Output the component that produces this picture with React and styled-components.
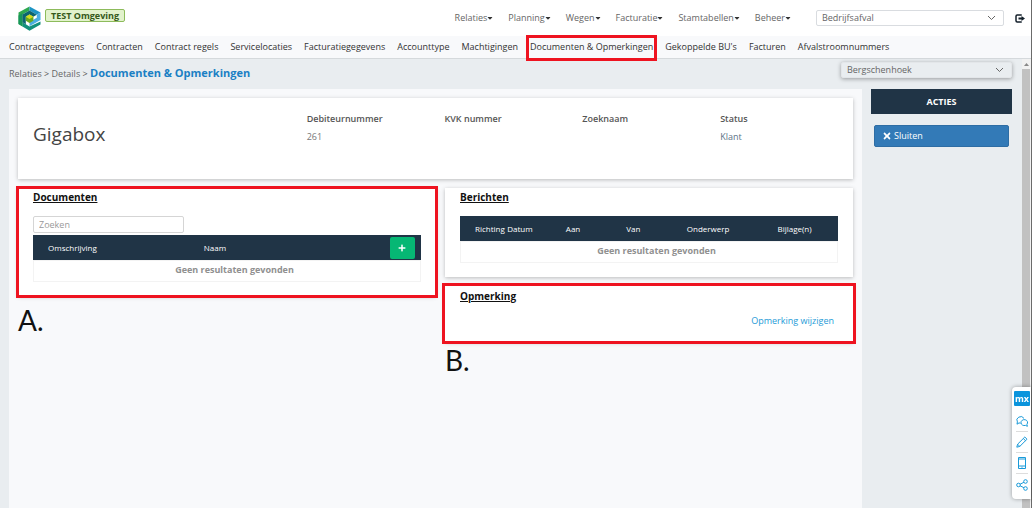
import React from "react";
import styled, { createGlobalStyle, css } from "styled-components";
import { FaCaretDown, FaPlus, FaTimes } from "react-icons/fa";

// -----------------------------------
// Styled Components
// -----------------------------------

const GlobalStyle = createGlobalStyle`
  * {
    box-sizing: border-box;
  }

  body {
    margin: 0;
    font-family: "Open Sans", sans-serif;
    font-size: 9px;
    line-height: 12px;
    color: #555555;
    background: #ffffff;
  }

  button, input, select {
    font: inherit;
  }

  a {
    text-decoration: none;
  }
`;

const Page = styled.div`
  display: flex;
  flex-direction: column;
  min-height: 100vh;
  border-right: 1px solid #6b6b6b;
`;

const TopBar = styled.header`
  display: flex;
  align-items: center;
  height: 36px;
  padding: 0 6px 0 18px;
`;

const EnvironmentTag = styled.span`
  align-self: flex-start;
  margin: 9px auto 0 4px;
  padding: 0 5px;
  border: 1px solid #8dbb5b;
  border-radius: 2px;
  background: #e2f2cc;
  color: #35591a;
  font-weight: 700;
  line-height: 11px;
`;

const MainMenu = styled.nav`
  display: flex;
  gap: 15px;
  margin-right: 25px;
`;

const MenuButton = styled.button`
  display: flex;
  align-items: center;
  padding: 0;
  border: 0;
  background: none;
  color: #666666;

  svg {
    width: 6px;
    height: 8px;
    color: #333333;
  }
`;

const SelectWrapper = styled.label`
  display: grid;
  align-items: center;
  width: ${(props) => props.$width};

  select,
  svg {
    grid-area: 1 / 1;
  }

  svg {
    justify-self: end;
    margin-right: 8px;
    pointer-events: none;
  }
`;

const Select = styled.select`
  appearance: none;
  width: 100%;
  height: 16px;
  padding: 0 5px;
  border: 1px solid #d9dce0;
  border-radius: 2px;
  background: #ffffff;
  color: #666666;

  ${(props) =>
    props.$raised &&
    css`
      border-color: #e3e6e9;
      background: #e9edf0;
      box-shadow: 0 1px 4px rgba(0, 0, 0, 0.35);
    `}
`;

const LogoutButton = styled.button`
  display: flex;
  margin-left: 11px;
  padding: 0;
  border: 0;
  background: none;
  color: #14202b;
`;

const SubNav = styled.nav`
  display: flex;
  align-items: center;
  gap: 12px;
  height: 23px;
  padding-left: 9px;
  border-bottom: 1px solid #d5d9dc;
  background: #f8f9fb;
`;

const SubNavLink = styled.a`
  position: relative;
  color: #333333;
  white-space: nowrap;
`;

const Highlight = styled.span`
  position: absolute;
  inset: ${(props) => props.$inset || "-2px"};
  border: 3px solid #ee1320;
  pointer-events: none;
`;

const Body = styled.div`
  display: flex;
  flex: 1;
  background: #e9edf0;
`;

const Content = styled.div`
  display: flex;
  flex: 1;
  flex-direction: column;
  padding: 0 10px 0 9px;
`;

const CrumbRow = styled.div`
  display: flex;
  align-items: flex-start;
  justify-content: space-between;
  height: 30px;
  padding-top: 3px;
`;

const Breadcrumb = styled.div`
  line-height: 22px;

  a {
    color: #666666;
  }

  strong {
    color: #1b80c4;
    font-size: 11px;
  }
`;

const Columns = styled.div`
  display: flex;
  flex: 1;
  gap: 9px;
`;

const Panel = styled.main`
  flex: 1;
  padding: 9px;
  background: #f8f9fb;
`;

const Card = styled.section`
  position: relative;
  padding: 3px 15px 14px;
  background: #ffffff;
  box-shadow: 0 1px 4px rgba(0, 0, 0, 0.25);
`;

const CustomerCard = styled(Card)`
  display: grid;
  grid-template-columns: 274fr 138fr 138fr 138fr 133fr;
  height: 81px;
  padding: 15px 0 0 15px;
`;

const CustomerName = styled.h1`
  margin: 8px 0 0;
  color: #444444;
  font-size: 19px;
  font-weight: 400;
  line-height: 26px;
`;

const Fact = styled.dl`
  margin: 0;

  dt {
    font-weight: 600;
  }

  dd {
    margin: 6px 0 0;
    color: ${(props) => (props.$accent ? "#5c7386" : "#777777")};
  }
`;

const CardGrid = styled.div`
  display: grid;
  grid-template-columns: 418fr 408fr;
  align-items: start;
  gap: 9px;
  margin-top: 9px;
`;

const Stack = styled.div`
  display: grid;
  gap: ${(props) => props.$gap || "8px"};
`;

const CardTitle = styled.h2`
  margin: 0 0 13px;
  color: #111111;
  font-size: 10px;
  font-weight: 700;
  line-height: 12px;
  text-decoration: underline;
`;

const SearchInput = styled.input`
  display: block;
  width: 151px;
  height: 17px;
  margin-bottom: 2px;
  padding: 0 5px;
  border: 1px solid #d5d5d5;
  border-radius: 2px;

  &::placeholder {
    color: #999999;
  }
`;

const Table = styled.table`
  width: 100%;
  border-collapse: separate;
  border-spacing: 0;
  table-layout: fixed;

  th {
    height: 25px;
    padding: 0;
    background: #203446;
    color: #ffffff;
    font-size: 8px;
    font-weight: 400;
    text-align: left;
  }

  th:first-child {
    padding-left: 15px;
  }

  td {
    height: 22px;
    padding: 0 0 3px 15px;
    border: 1px solid #f3f3f3;
    color: #909090;
    font-weight: 700;
    text-align: center;
  }
`;

const AddButton = styled.button`
  display: flex;
  align-items: center;
  justify-content: center;
  width: 25px;
  height: 22px;
  border: 0;
  border-radius: 2px;
  background: #06b774;
  color: #ffffff;
`;

const RemarkCard = styled(Card)`
  display: flex;
  flex-direction: column;
  padding: 5px 19px 15px 15px;
`;

const RemarkLink = styled.a`
  align-self: flex-end;
  color: #1e9bd7;
`;

const Marker = styled.div`
  color: #111111;
  font-family: Lato, sans-serif;
  font-size: 28px;
  font-weight: 400;
  line-height: 20px;
`;

const Actions = styled.aside`
  width: 141px;
`;

const ActionsTitle = styled.h2`
  margin: 0 0 11px;
  background: #203446;
  color: #ffffff;
  font-size: 9px;
  font-weight: 700;
  line-height: 25px;
  text-align: center;
`;

const CloseButton = styled.button`
  display: flex;
  align-items: center;
  gap: 2px;
  width: 135px;
  height: 22px;
  margin: 0 auto;
  padding: 0 7px;
  border: 1px solid #2e6da4;
  border-radius: 2px;
  background: #337ab7;
  color: #ffffff;
`;

const ScrollTrack = styled.div`
  display: flex;
  flex-direction: column;
  width: 9px;
  background: #f1f1f1;

  svg {
    margin: 3px auto;
  }
`;

const ScrollThumb = styled.div`
  flex: 1;
  margin: 0 1px 0 0;
  background: #c1c1c1;
`;

const Toolbox = styled.div`
  position: fixed;
  right: 1px;
  bottom: 9px;
  display: grid;
  justify-items: center;
  width: 19px;
  padding: 4px 1px 4px 2px;
  border-radius: 4px 0 0 4px;
  background: #ffffff;
  box-shadow: 0 0 4px rgba(0, 0, 0, 0.35);
`;

const ToolboxLogo = styled.span`
  width: 16px;
  margin-bottom: 5px;
  border-radius: 1px;
  background: #0b94dc;
  color: #ffffff;
  font-size: 9px;
  font-weight: 700;
  line-height: 15px;
  text-align: center;
`;

const ToolButton = styled.button`
  display: flex;
  align-items: center;
  justify-content: center;
  width: 12px;
  height: 21px;
  padding: 0;
  border: 0;
  border-bottom: 1px solid #dddddd;
  background: none;
  color: #1a9ad9;

  &:last-child {
    border-bottom: 0;
  }
`;

// -----------------------------------
// React Components
// -----------------------------------

const menuItems = [
  "Relaties",
  "Planning",
  "Wegen",
  "Facturatie",
  "Stamtabellen",
  "Beheer"
];

const subNavItems = [
  "Contractgegevens",
  "Contracten",
  "Contract regels",
  "Servicelocaties",
  "Facturatiegegevens",
  "Accounttype",
  "Machtigingen",
  "Documenten & Opmerkingen",
  "Gekoppelde BU's",
  "Facturen",
  "Afvalstroomnummers"
];

const tools = [
  {
    label: "Feedback",
    icon: (
      <path d="M4.6 8.2 3 7.9 1 9.2l.4-2.3A3.8 3.5 0 1 1 8 3.4M5 7.8a3.3 2.9 0 1 1 5.9 1.5l.5 2-2-.9A3.3 2.9 0 0 1 5 7.8Z" />
    )
  },
  {
    label: "Bewerken",
    icon: <path d="m.8 11.2.8-3L8.8 1l2.2 2.2-7.2 7.2-3 .8ZM7.3 2.5l2.2 2.2M1.6 8.2l2.2 2.2" />
  },
  {
    label: "Mobiel",
    icon: <path d="M2.5.5h7v11h-7V.5Zm0 1.5h7m-7 7h7M5.5 10.2h1" />
  },
  {
    label: "Delen",
    icon: (
      <>
        <circle cx="2.5" cy="6" r="1.8" />
        <circle cx="9.5" cy="2.5" r="1.8" />
        <circle cx="9.5" cy="9.5" r="1.8" />
        <path d="m4.1 5.2 3.8-1.9M4.1 6.8l3.8 1.9" />
      </>
    )
  }
];

const Logo = () => (
  <svg width="23" height="25" viewBox="0 0 23 25" aria-hidden="true">
    <path d="M.5 6.5 11.5.5v4l-7 3.900v12L.5 18z" fill="#2ea84f" />
    <path d="m11.500.5 11 6-3.700 2.200-7.300-4.200z" fill="#1d94c4" />
    <path d="m22.500 6.500v7.500l-11 6.300v-4.300l7.300-4.200V8.700z" fill="#4aaee2" />
    <path d="m22.500 15.500v3l-11 6.200-7-4.200v-4.200l7 4.200z" fill="#12907c" />
    <path d="M.5 9.500l4-2.200v13.200L.5 18z" fill="#17965a" />
    <path d="m4.500 8.400 7-3.900 7.300 4.200-3.500 2-3.800-2.200-3.700 2.200v7.600l-3.300-2z" fill="#0c6571" />
    <path d="m11.500 8.500 3.900 2.200v4.100L11.500 17l-3.700-2.200v-4.100z" fill="#69a91f" />
    <path d="m11.500 8.500 3.900 2.200-3.900 2.200-3.700-2.200z" fill="#d5dc20" />
  </svg>
);

const LogoutIcon = () => (
  <svg width="10" height="9" viewBox="0 0 10 9" aria-hidden="true">
    <path
      d="M6 1.700V1H2.200Q1 1 1 2.200v4.600Q1 8 2.200 8H6v-.7"
      fill="none"
      stroke="currentColor"
      strokeWidth="1.500"
    />
    <path d="M3.500 3.600h3V2L10 4.500 6.500 7V5.400h-3z" fill="currentColor" />
  </svg>
);

const Chevron = () => (
  <svg width="9" height="6" viewBox="0 0 9 6" fill="none" stroke="#666666">
    <path d="m1 1 3.5 3.5L8 1" />
  </svg>
);

const Dropdown = ({ label, value, width, raised }) => (
  <SelectWrapper $width={width}>
    <Select aria-label={label} $raised={raised}>
      <option>{value}</option>
    </Select>
    <Chevron />
  </SelectWrapper>
);

const ResultTable = ({ columns, action }) => (
  <Table>
    <colgroup>
      {columns.map((column) => (
        <col key={column.name} style={{ width: column.width }} />
      ))}
    </colgroup>
    <thead>
      <tr>
        {columns.map((column) => (
          <th key={column.name}>{column.name || action}</th>
        ))}
      </tr>
    </thead>
    <tbody>
      <tr>
        <td colSpan={columns.length}>Geen resultaten gevonden</td>
      </tr>
    </tbody>
  </Table>
);

const documentColumns = [
  { name: "Omschrijving", width: "44%" },
  { name: "Naam", width: "48%" },
  { name: "", width: "8%" }
];

const messageColumns = [
  { name: "Richting", width: "12.5%" },
  { name: "Datum", width: "15.5%" },
  { name: "Aan", width: "16%" },
  { name: "Van", width: "16%" },
  { name: "Onderwerp", width: "24%" },
  { name: "Bijlage(n)", width: "16%" }
];

const App = () => (
  <>
    <GlobalStyle />
    <Page>
      <TopBar>
        <Logo />
        <EnvironmentTag>TEST Omgeving</EnvironmentTag>
        <MainMenu>
          {menuItems.map((item) => (
            <MenuButton key={item} type="button">
              {item}
              <FaCaretDown />
            </MenuButton>
          ))}
        </MainMenu>
        <Dropdown label="Bedrijfsonderdeel" value="Bedrijfsafval" width="188px" />
        <LogoutButton type="button" aria-label="Uitloggen">
          <LogoutIcon />
        </LogoutButton>
      </TopBar>
      <SubNav>
        {subNavItems.map((item) => (
          <SubNavLink key={item} href="#">
            {item}
            {item === "Documenten & Opmerkingen" && (
              <Highlight $inset="-6px -4px -8px" />
            )}
          </SubNavLink>
        ))}
      </SubNav>
      <Body>
        <Content>
          <CrumbRow>
            <Breadcrumb>
              <a href="#">Relaties</a> &gt; <a href="#">Details</a> &gt;{" "}
              <strong>Documenten &amp; Opmerkingen</strong>
            </Breadcrumb>
            <Dropdown label="Vestiging" value="Bergschenhoek" width="171px" raised />
          </CrumbRow>
          <Columns>
            <Panel>
              <CustomerCard>
                <CustomerName>Gigabox</CustomerName>
                <Fact>
                  <dt>Debiteurnummer</dt>
                  <dd>261</dd>
                </Fact>
                <Fact>
                  <dt>KVK nummer</dt>
                </Fact>
                <Fact>
                  <dt>Zoeknaam</dt>
                </Fact>
                <Fact $accent>
                  <dt>Status</dt>
                  <dd>Klant</dd>
                </Fact>
              </CustomerCard>
              <CardGrid>
                <Stack $gap="14px">
                  <Card>
                    <CardTitle>Documenten</CardTitle>
                    <SearchInput type="text" aria-label="Zoeken" placeholder="Zoeken" />
                    <ResultTable
                      columns={documentColumns}
                      action={
                        <AddButton type="button" aria-label="Toevoegen">
                          <FaPlus size={8} />
                        </AddButton>
                      }
                    />
                    <Highlight />
                  </Card>
                  <Marker>A.</Marker>
                </Stack>
                <Stack>
                  <Card>
                    <CardTitle>Berichten</CardTitle>
                    <ResultTable columns={messageColumns} />
                  </Card>
                  <RemarkCard>
                    <CardTitle>Opmerking</CardTitle>
                    <RemarkLink href="#">Opmerking wijzigen</RemarkLink>
                    <Highlight $inset="-2px -3px" />
                  </RemarkCard>
                  <Marker>B.</Marker>
                </Stack>
              </CardGrid>
            </Panel>
            <Actions>
              <ActionsTitle>ACTIES</ActionsTitle>
              <CloseButton type="button">
                <FaTimes size={10} />
                Sluiten
              </CloseButton>
            </Actions>
          </Columns>
        </Content>
        <ScrollTrack>
          <svg width="5" height="4" viewBox="0 0 5 4" fill="#888888">
            <path d="M0 4 2.5 1 5 4z" />
          </svg>
          <ScrollThumb />
        </ScrollTrack>
      </Body>
    </Page>
    <Toolbox>
      <ToolboxLogo>mx</ToolboxLogo>
      {tools.map((tool) => (
        <ToolButton key={tool.label} type="button" aria-label={tool.label}>
          <svg width="12" height="12" viewBox="0 0 12 12" fill="none" stroke="currentColor">
            {tool.icon}
          </svg>
        </ToolButton>
      ))}
    </Toolbox>
  </>
);

export default App;
